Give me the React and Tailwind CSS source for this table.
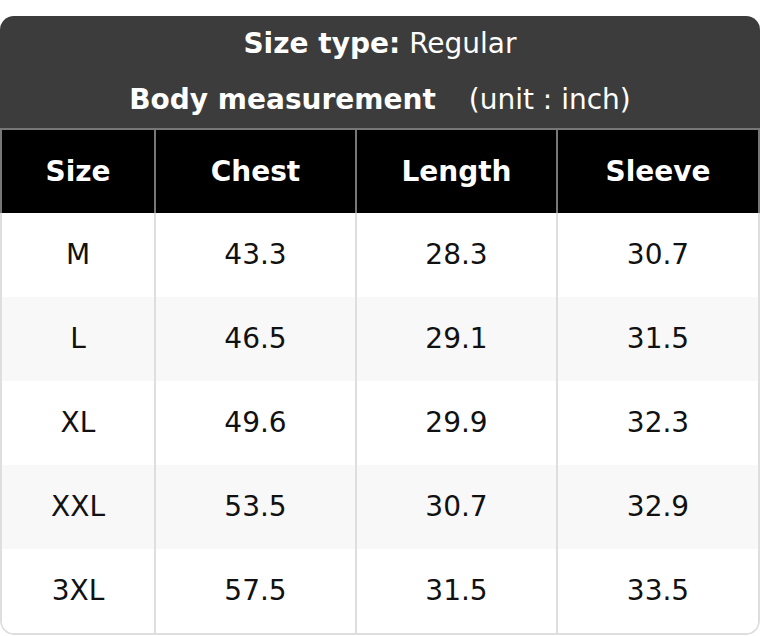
const HEADERS = ['Size', 'Chest', 'Length', 'Sleeve'];

const ROWS = [
    ['M', '43.3', '28.3', '30.7'],
    ['L', '46.5', '29.1', '31.5'],
    ['XL', '49.6', '29.9', '32.3'],
    ['XXL', '53.5', '30.7', '32.9'],
    ['3XL', '57.5', '31.5', '33.5'],
];

const App = () => {
    return (
        <div className="pt-4 bg-white" style={{ fontFamily: '"DejaVu Sans", sans-serif' }}>
            <div className="rounded-[14px] overflow-hidden">
                <div className="bg-[#3c3c3c] text-white text-[28px] text-center">
                    <div className="h-14 flex items-center justify-center">
                        <span className="font-bold">Size type:</span>
                        <span className="ml-[9px]">Regular</span>
                    </div>
                    <div className="h-14 flex items-center justify-center">
                        <span className="font-bold">Body measurement</span>
                        <span className="ml-[33px]">(unit : inch)</span>
                    </div>
                </div>
                <div className="grid grid-cols-[152px_201px_201px_1fr] bg-black text-white text-[28px] font-bold border-t-2 border-x-2 border-[#777]">
                    {HEADERS.map((h, i) => (
                        <div
                            key={h}
                            className={`h-[83px] flex items-center justify-center ${i > 0 ? 'border-l-2 border-[#777]' : ''}`}
                        >
                            {h}
                        </div>
                    ))}
                </div>
                <div className="border-x-2 border-b-2 border-[#dedede] rounded-b-[14px] overflow-hidden">
                    {ROWS.map((row, r) => (
                        <div
                            key={row[0]}
                            className={`grid grid-cols-[152px_201px_201px_1fr] text-[28px] text-[#111] ${r % 2 === 1 ? 'bg-[#f8f8f8]' : 'bg-white'}`}
                        >
                            {row.map((cell, i) => (
                                <div
                                    key={i}
                                    className={`h-[84px] flex items-center justify-center ${i > 0 ? 'border-l-2 border-[#dedede]' : ''}`}
                                >
                                    {cell}
                                </div>
                            ))}
                        </div>
                    ))}
                </div>
            </div>
        </div>
    );
};

export default App;
